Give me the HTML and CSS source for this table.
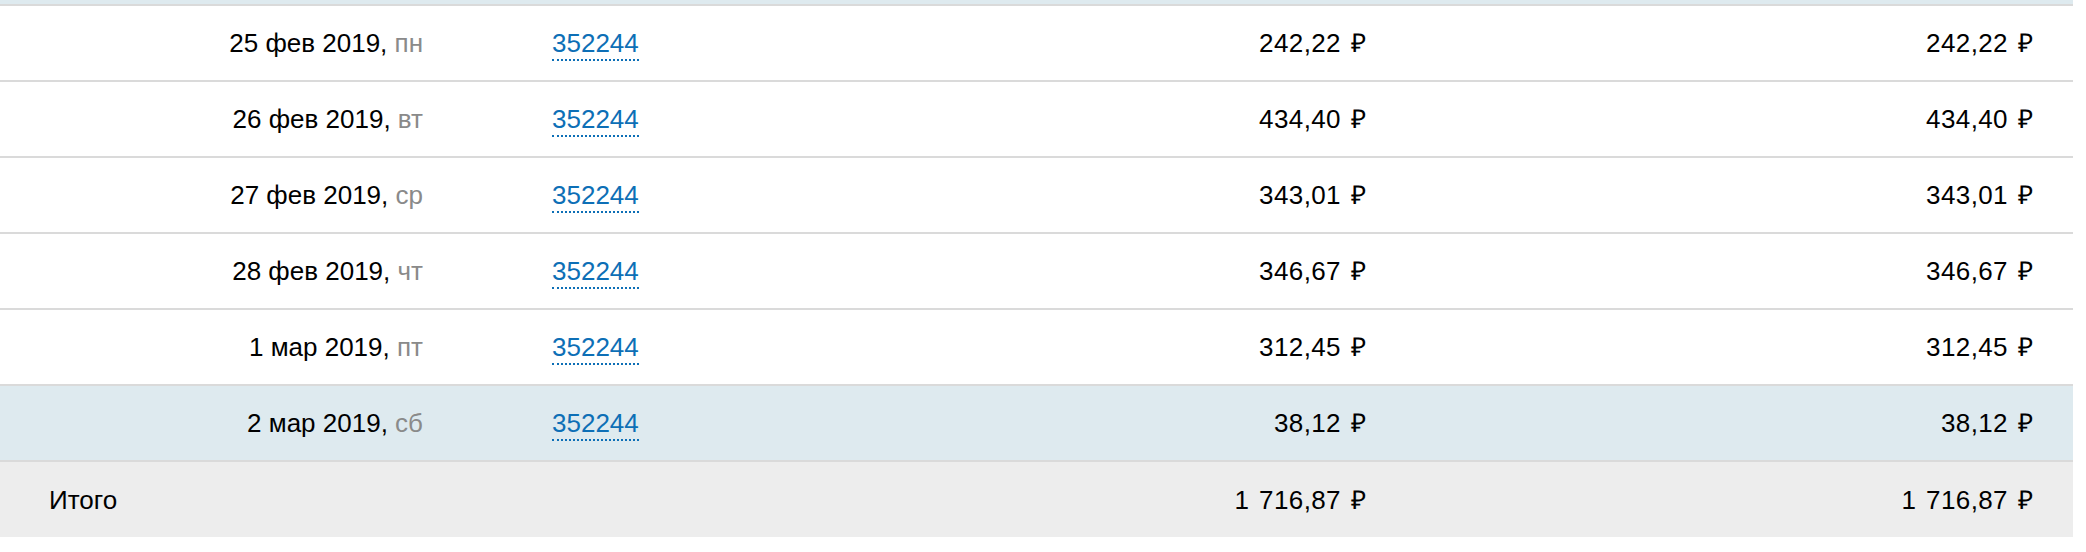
FILE: index.html
```html
<!DOCTYPE html>
<html lang="ru">
<head>
    <meta charset="UTF-8">
    <meta name="viewport" content="width=device-width, initial-scale=1.0">
    <title>Чеки по дням</title>
    <link rel="stylesheet" href="styles.css">
</head>
<body>
<div class="report">
    <div class="row-edge"></div>
    <div class="row">
        <div class="cell cell--date">25 фев 2019, <span class="weekday">пн</span></div>
        <div class="cell cell--shop"><a class="shop-link" href="#">352244</a></div>
        <div class="cell cell--sum">242,22 ₽</div>
        <div class="cell cell--sum">242,22 ₽</div>
    </div>
    <div class="row">
        <div class="cell cell--date">26 фев 2019, <span class="weekday">вт</span></div>
        <div class="cell cell--shop"><a class="shop-link" href="#">352244</a></div>
        <div class="cell cell--sum">434,40 ₽</div>
        <div class="cell cell--sum">434,40 ₽</div>
    </div>
    <div class="row">
        <div class="cell cell--date">27 фев 2019, <span class="weekday">ср</span></div>
        <div class="cell cell--shop"><a class="shop-link" href="#">352244</a></div>
        <div class="cell cell--sum">343,01 ₽</div>
        <div class="cell cell--sum">343,01 ₽</div>
    </div>
    <div class="row">
        <div class="cell cell--date">28 фев 2019, <span class="weekday">чт</span></div>
        <div class="cell cell--shop"><a class="shop-link" href="#">352244</a></div>
        <div class="cell cell--sum">346,67 ₽</div>
        <div class="cell cell--sum">346,67 ₽</div>
    </div>
    <div class="row">
        <div class="cell cell--date">1 мар 2019, <span class="weekday">пт</span></div>
        <div class="cell cell--shop"><a class="shop-link" href="#">352244</a></div>
        <div class="cell cell--sum">312,45 ₽</div>
        <div class="cell cell--sum">312,45 ₽</div>
    </div>
    <div class="row row--active">
        <div class="cell cell--date">2 мар 2019, <span class="weekday">сб</span></div>
        <div class="cell cell--shop"><a class="shop-link" href="#">352244</a></div>
        <div class="cell cell--sum">38,12 ₽</div>
        <div class="cell cell--sum">38,12 ₽</div>
    </div>
    <div class="row row--total">
        <div class="cell cell--label">Итого</div>
        <div class="cell cell--shop"></div>
        <div class="cell cell--sum">1 716,87 ₽</div>
        <div class="cell cell--sum">1 716,87 ₽</div>
    </div>
</div>
</body>
</html>
```

FILE: styles.css
```css
:root {
    --text-color: #000000;
    --muted-color: #8a8a8a;
    --link-color: #0d6fb6;
    --border-color: #dadada;
    --active-bg-color: #deeaef; /* строка выбранного дня */
    --total-bg-color: #ededed;
}

*, *::before, *::after {
    box-sizing: border-box;
}

body {
    margin: 0;
    padding: 0;
    background: #ffffff;
    color: var(--text-color);
    font-family: 'Liberation Sans', Arial, sans-serif;
    font-size: 26px;
    overflow: hidden;
}

.report {
    width: 2073px;
}

/* край предыдущей (выбранной) строки, прокрученной вверх */
.row-edge {
    height: 4px;
    background-color: var(--active-bg-color);
}

.row {
    display: grid;
    grid-template-columns: 423px 420px 523px 667px;
    height: 76px;
    border-top: 2px solid var(--border-color);
    align-items: center;
}

.row--active {
    background-color: var(--active-bg-color);
}

.row--total {
    background-color: var(--total-bg-color);
    height: 77px;
}

.cell {
    line-height: 30px;
    white-space: nowrap;
}

.cell--date {
    text-align: right;
}

.weekday {
    color: var(--muted-color);
}

.cell--shop {
    padding-left: 129px;
}

.shop-link {
    color: var(--link-color);
    text-decoration: none;
    border-bottom: 2px dotted var(--link-color);
    padding-bottom: 1px;
}

.cell--sum {
    text-align: right;
    word-spacing: 2px;
    letter-spacing: 0.4px;
}

.cell--label {
    padding-left: 49px;
}
```
